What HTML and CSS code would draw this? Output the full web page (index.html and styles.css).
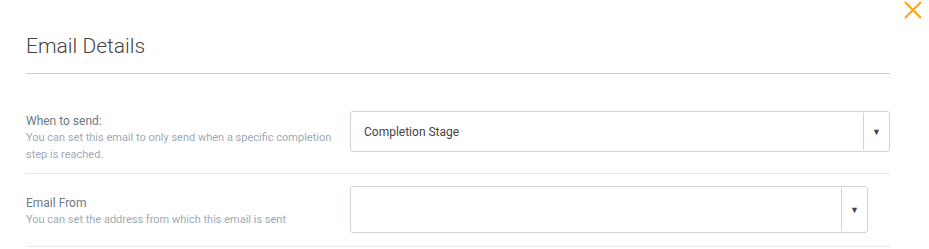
FILE: index.html
```html
<!DOCTYPE html>
<html lang="en">
<head>
  <meta charset="UTF-8">
  <meta name="viewport" content="width=device-width, initial-scale=1.0">
  <title>Email Details</title>
  <link rel="stylesheet" href="styles.css">
</head>
<body>
  <button class="close-btn" aria-label="Close">
    <svg width="20" height="20" viewBox="0 0 20 20">
      <path d="M2 2 L18 18 M18 2 L2 18" stroke="#ffa614" stroke-width="2.2" fill="none"/>
    </svg>
  </button>
  <div class="modal">
    <div class="modal-header">
      <h2>Email Details</h2>
    </div>

    <div class="form-row row-send">
      <div class="field-label">
        <div class="label-title">When to send:</div>
        <div class="label-desc">You can set this email to only send when a specific completion step is reached.</div>
      </div>
      <div class="select select-wide">
        <span class="select-value">Completion Stage</span>
        <span class="select-arrow">&#9660;</span>
      </div>
    </div>

    <div class="form-row row-from">
      <div class="field-label">
        <div class="label-title">Email From</div>
        <div class="label-desc">You can set the address from which this email is sent</div>
      </div>
      <div class="select select-narrow">
        <span class="select-value"></span>
        <span class="select-arrow">&#9660;</span>
      </div>
    </div>
  </div>
</body>
</html>
```

FILE: styles.css
```css
/* General Styles */
body {
  margin: 0;
  font-family: 'Roboto', 'Liberation Sans', sans-serif;
  background: #fff;
  color: #333;
}

.modal {
  width: 864px;
  margin-left: 26px;
}

.close-btn {
  position: absolute;
  top: 0;
  right: 6px;
  padding: 0;
  width: 20px;
  height: 20px;
  border: none;
  background: transparent;
  cursor: pointer;
}

.close-btn svg {
  display: block;
}

.modal-header {
  padding-top: 32px;
  padding-bottom: 13px;
  border-bottom: 1px solid #c5cfd9;
}

.modal-header h2 {
  margin: 0;
  font-size: 21px;
  line-height: 28px;
  font-weight: 300;
  color: #444;
}

.form-row {
  display: flex;
  align-items: flex-start;
  border-bottom: 1px solid #e6eaee;
}

.row-send {
  padding: 37px 0 10px;
}

.row-send .field-label {
  margin-top: 2px;
}

.row-from {
  padding: 12px 0 13px;
}

.row-from .field-label {
  margin-top: 9px;
}

.field-label {
  width: 324px;
  flex-shrink: 0;
}

.label-title {
  font-size: 12px;
  line-height: 16px;
  color: #6c7a87;
}

.label-desc {
  font-size: 11px;
  line-height: 17px;
  color: #9eaab5;
  padding-right: 14px;
}

.select {
  display: flex;
  align-items: stretch;
  box-sizing: border-box;
  border: 1px solid #cdd4dc;
  border-radius: 3px;
  background: #fff;
}

.select-wide {
  width: 540px;
  height: 41px;
}

.select-narrow {
  width: 518px;
  height: 47px;
}

.select-value {
  flex: 1;
  display: flex;
  align-items: center;
  padding-left: 13px;
  font-size: 12px;
  color: #444;
}

.select-arrow {
  width: 25px;
  margin: 1px 0;
  border-left: 1px solid #cdd4dc;
  display: flex;
  align-items: center;
  justify-content: center;
  font-size: 9px;
  color: #444;
}
```
